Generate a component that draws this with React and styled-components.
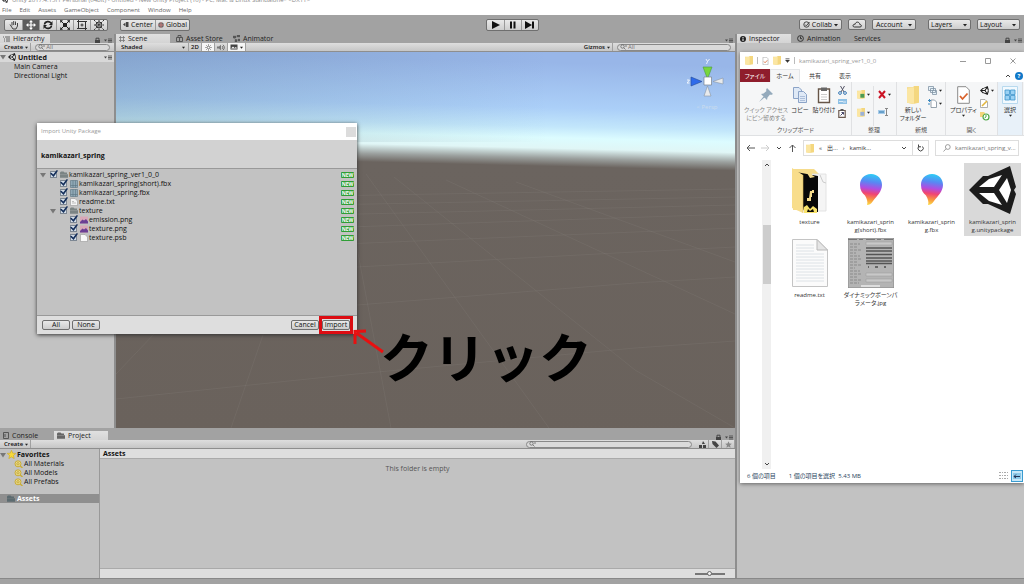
import styled, { createGlobalStyle, css } from "styled-components";

const unityFiles = [
  { name: "kamikazari_spring_ver1_0_0", kind: "folder", depth: 0, open: true },
  { name: "kamikazari_spring(short).fbx", kind: "mesh", depth: 1 },
  { name: "kamikazari_spring.fbx", kind: "mesh", depth: 1 },
  { name: "readme.txt", kind: "text", depth: 1 },
  { name: "texture", kind: "folder", depth: 1, open: true },
  { name: "emission.png", kind: "image", depth: 2 },
  { name: "texture.png", kind: "image", depth: 2 },
  { name: "texture.psb", kind: "blank", depth: 2 },
];

const explorerFiles = [
  { name: "texture", Icon: TextureFolder },
  { name: "kamikazari_sprin\ng(short).fbx", Icon: Balloon },
  { name: "kamikazari_sprin\ng.fbx", Icon: Balloon },
  { name: "kamikazari_sprin\ng.unitypackage", Icon: UnityCube, selected: true },
  { name: "readme.txt", Icon: TextDocument },
  { name: "ダイナミックボーンパ\nラメータ.jpg", Icon: InspectorThumb },
];

export default function App() {
  return (
    <>
      <GlobalStyle />
      <Editor>
        <TitleStrip>
          <UnityMark size={6} />
          Unity 2017.4.15f1 Personal (64bit) - Untitled - New Unity Project (10) - PC, Mac &amp; Linux Standalone* &lt;DX11&gt;
        </TitleStrip>
        <MenuBar>
          {["File", "Edit", "Assets", "GameObject", "Component", "Window", "Help"].map((item) => (
            <MenuItem key={item}>{item}</MenuItem>
          ))}
        </MenuBar>
        <Toolbar />
        <Workspace>
          <LeftSide>
            <Upper>
              <Hierarchy />
              <Scene />
            </Upper>
            <Project />
          </LeftSide>
          <Inspector />
        </Workspace>
        <StatusLine />
        <ImportDialog />
        <Callout>
          <svg width="32" height="26" viewBox="0 0 32 26">
            <path d="M31 23L3 3M3 15V2.500L14 2" fill="none" stroke="#e81010" strokeWidth="3" />
          </svg>
          <CalloutText>クリック</CalloutText>
        </Callout>
      </Editor>
    </>
  );
}

function Toolbar() {
  return (
    <ToolbarRow>
      <ToolSide>
        <ButtonGroup>
          <ToolButton aria-label="Hand">
            <svg width="10" height="10" viewBox="0 0 10 10" fill="none" stroke="#444">
              <path d="M2 6L1 4.500M2 6L4 9H7L8.500 6V3M3 5.500V2M4.700 5V1M6.500 5V1.500" />
            </svg>
          </ToolButton>
          <ToolButton aria-label="Move" $active>
            <svg width="10" height="10" viewBox="0 0 10 10" fill="#fff">
              <path d="M5 0L7 2.300H5.600V4.400H7.700V3L10 5L7.700 7V5.600H5.600V7.700H7L5 10L3 7.700H4.400V5.600H2.300V7L0 5L2.300 3V4.400H4.400V2.300H3Z" />
            </svg>
          </ToolButton>
          <ToolButton aria-label="Rotate">
            <svg width="10" height="10" viewBox="0 0 10 10">
              <path d="M1.500 4.500C2 1 6.500 .8 8 3.200M8.500 5.500C8 9 3.500 9.200 2 6.800" fill="none" stroke="#222" strokeWidth="1.600" />
              <path d="M9.500 1V5H6ZM.5 9V5H4Z" fill="#222" />
            </svg>
          </ToolButton>
          <ToolButton aria-label="Scale">
            <svg width="12" height="10" viewBox="0 0 12 10">
              <path d="M2 1L10 9M10 1L2 9" stroke="#222" />
              <path d="M4 3H8V7H4ZM1 0L4 .5L1.500 3ZM11 0L8 .5L10.500 3ZM1 10L4 9.500L1.500 7ZM11 10L8 9.500L10.500 7Z" fill="#222" />
            </svg>
          </ToolButton>
          <ToolButton aria-label="Rect">
            <svg width="10" height="10" viewBox="0 0 10 10" fill="none" stroke="#333">
              <path d="M1.500 1.500H8.500V8.500H1.500Z" />
              <path d="M0 1.500H3M1.500 0V3M7 8.500H10M8.500 7V10M7 1.500H10M0 8.500H3" />
              <circle cx="5" cy="5" r="1" />
            </svg>
          </ToolButton>
          <ToolButton aria-label="Transform">
            <svg width="12" height="10" viewBox="0 0 12 10" fill="none" stroke="#333">
              <path d="M1 0L11 10M11 0L1 10M6 0V10M1 5H11" strokeDasharray="2 1" />
              <circle cx="6" cy="5" r="3" />
            </svg>
          </ToolButton>
        </ButtonGroup>
        <ButtonGroup>
          <PivotButton>
            <svg width="6" height="5" viewBox="0 0 6 5" fill="#444">
              <path d="M0 2.500L2.500 .5V4.500ZM3 0H5.500V5H3Z" />
            </svg>
            Center
          </PivotButton>
          <PivotButton>
            <svg width="6" height="6" viewBox="0 0 6 6">
              <circle cx="3" cy="3" r="2.800" fill="#666" />
              <path d="M0 3H6M3 0V6" stroke="#d98080" strokeWidth=".8" />
            </svg>
            Global
          </PivotButton>
        </ButtonGroup>
      </ToolSide>
      <ButtonGroup>
        <ToolButton aria-label="Play">
          <svg width="9" height="8" viewBox="0 0 9 8"><path d="M1 0L9 4L1 8Z" fill="#111" /></svg>
        </ToolButton>
        <ToolButton aria-label="Pause">
          <svg width="9" height="8" viewBox="0 0 9 8"><path d="M2 .5H4V7.500H2ZM5.500 .5H7.500V7.500H5.500Z" fill="#111" /></svg>
        </ToolButton>
        <ToolButton aria-label="Step">
          <svg width="9" height="8" viewBox="0 0 9 8"><path d="M0 0L7 4V.5H9V7.500H7V4L0 8Z" fill="#111" /></svg>
        </ToolButton>
      </ButtonGroup>
      <ToolSide $end>
        <DropButton $width={43}>
          <svg width="7" height="7" viewBox="0 0 7 7" fill="none" stroke="#444">
            <circle cx="3.500" cy="3.500" r="2.700" />
            <path d="M2 3.500L3.300 4.800L6.500 1" />
          </svg>
          <span>Collab</span>
          <Caret />
        </DropButton>
        <DropButton $width={18} aria-label="Cloud">
          <svg width="10" height="7" viewBox="0 0 10 7">
            <path d="M2.500 6H8C10 6 9.800 3.500 7.800 3.500C7.600 .5 3.500 .3 3.200 3.200C.5 3 .3 6 2.500 6Z" fill="none" stroke="#333" />
          </svg>
        </DropButton>
        <DropButton $width={44}>
          <span>Account</span>
          <Caret />
        </DropButton>
        <Spacer />
        <DropSelect label="Layers" />
        <DropSelect label="Layout" />
      </ToolSide>
    </ToolbarRow>
  );
}

function DropSelect({ label }) {
  return (
    <SelectFrame>
      <PlainSelect aria-label={label} defaultValue={label}>
        <option>{label}</option>
      </PlainSelect>
      <Caret />
    </SelectFrame>
  );
}

function Hierarchy() {
  return (
    <HierarchyPanel>
      <TabRow>
        <Tab $active>
          <ListIcon />
          Hierarchy
        </Tab>
        <PanelCorner lock />
      </TabRow>
      <SubBar>
        <BarButton>
          Create <Caret small />
        </BarButton>
        <SearchBox $grow>
          <SearchIcon />
          <input aria-label="Search hierarchy" placeholder="All" />
        </SearchBox>
      </SubBar>
      <SceneName>
        <Triangle />
        <UnityMark size={8} />
        <strong>Untitled</strong>
        <PanelCorner />
      </SceneName>
      <HierarchyRow>Main Camera</HierarchyRow>
      <HierarchyRow>Directional Light</HierarchyRow>
    </HierarchyPanel>
  );
}

function Scene() {
  return (
    <ScenePanel>
      <TabRow>
        <Tab $active $wide>
          <GridIcon />
          Scene
        </Tab>
        <Tab $wide>
          <BagIcon />
          Asset Store
        </Tab>
        <Tab>
          <NodesIcon />
          Animator
        </Tab>
        <PanelCorner />
      </TabRow>
      <SubBar>
        <ShadeSelect>
          <PlainSelect $small aria-label="Draw mode" defaultValue="Shaded">
            <option>Shaded</option>
          </PlainSelect>
          <Caret small />
        </ShadeSelect>
        <BarButton>2D</BarButton>
        <BarButton $on aria-label="Lighting">
          <svg width="7" height="7" viewBox="0 0 7 7" stroke="#888">
            <path d="M3.500 0V7M0 3.500H7M1 1L6 6M6 1L1 6" strokeWidth=".7" />
            <circle cx="3.500" cy="3.500" r="1.300" fill="#fff" />
          </svg>
        </BarButton>
        <BarButton aria-label="Audio">
          <svg width="8" height="7" viewBox="0 0 8 7" fill="none" stroke="#555">
            <path d="M0 2.500H2L4 .8V6.200L2 4.500H0Z" fill="#777" stroke="none" />
            <path d="M5 2C6 3 6 4 5 5M6 .8C7.800 2.500 7.800 4.500 6 6.200" strokeWidth=".8" />
          </svg>
        </BarButton>
        <BarButton $on aria-label="Effects">
          <svg width="8" height="6" viewBox="0 0 8 6">
            <path d="M.5 .5H7.500V5.500H.5Z" fill="#444" />
            <path d="M1 4.500L3 2.500L4.500 4L6 3L7 4.500Z" fill="#fff" />
          </svg>
          <Caret small />
        </BarButton>
        <Push />
        <BarButton>
          Gizmos <Caret small />
        </BarButton>
        <SearchBox>
          <SearchIcon />
          <input aria-label="Search scene" placeholder="All" />
        </SearchBox>
      </SubBar>
      <Viewport>
        <Landscape viewBox="0 0 619 376" preserveAspectRatio="none">
          <defs>
            <linearGradient id="sky" gradientUnits="userSpaceOnUse" x1="0" y1="0" x2="-9" y2="376">
              <stop offset="0" stopColor="#98b6e8" />
              <stop offset=".12" stopColor="#abcff8" />
              <stop offset=".17" stopColor="#c2e6fb" />
              <stop offset=".2" stopColor="#dcfcff" />
              <stop offset=".228" stopColor="#e0f6f6" />
              <stop offset=".254" stopColor="#9ba09e" />
              <stop offset=".276" stopColor="#6b645f" />
              <stop offset="1" stopColor="#6a625c" />
            </linearGradient>
            <linearGradient id="shade">
              <stop offset="0" stopColor="#406070" stopOpacity=".22" />
              <stop offset=".7" stopColor="#406070" stopOpacity="0" />
            </linearGradient>
          </defs>
          <rect width="619" height="376" fill="url(#sky)" />
          <rect width="619" height="90" fill="url(#shade)" />
          <g fill="none" stroke="#8d8680" strokeOpacity=".25" strokeWidth=".8">
            <path d="M227 122L275 376M250 122L433 376M278 125L519 318L619 376M330 128L619 262M400 130L619 210" />
            <path d="M0 347L240 322L519 296L619 289M203 256L519 231L619 225M203 217L519 200L619 195M203 193L519 180L619 176M203 176L619 162M203 163L619 153M203 153L619 145M203 144L619 137" />
            <path d="M40 280L0 322M148 280L115 376" />
          </g>
        </Landscape>
        <Gizmo>
          <svg width="40" height="44" viewBox="0 0 40 44">
            <path d="M16 10H25L20.500 22Z" fill="#78d63c" stroke="#4a9a40" strokeWidth=".6" />
            <path d="M4 20V29L15 24.500Z" fill="#2f6bea" stroke="#254a94" strokeWidth=".6" />
            <path d="M36 21V27L26 24.500ZM17 39H24L20.500 29Z" fill="#e8eaec" stroke="#8896a4" strokeWidth=".6" />
            <path d="M17 20H24.500V28H17Z" fill="#fff" stroke="#76828c" strokeWidth=".7" />
            <path d="M19 2L20.500 4.500L22.500 2M20.500 4.500L19.500 7M0 23H2.500L0 26H2.500" fill="none" stroke="#fff" strokeWidth=".8" />
          </svg>
          <span>&lt; Persp</span>
        </Gizmo>
      </Viewport>
    </ScenePanel>
  );
}

function Project() {
  return (
    <ProjectPanel>
      <TabRow>
        <Tab $wide>
          <svg width="6" height="7" viewBox="0 0 6 7"><path d="M.5 .5H5.500V6.500H.5ZM2 2V5" fill="none" stroke="#555" /></svg>
          Console
        </Tab>
        <Tab $active $wide>
          <FolderIcon />
          Project
        </Tab>
        <PanelCorner lock />
      </TabRow>
      <SubBar>
        <BarButton>
          Create <Caret small />
        </BarButton>
        <Push />
        <SearchBox $long>
          <SearchIcon />
          <input aria-label="Search project" />
        </SearchBox>
        <BarButton aria-label="Search by type">
          <svg width="7" height="7" viewBox="0 0 7 7" fill="#444"><path d="M4 0L6 3H3ZM0 4H3V7H0ZM4 4H7V7H4Z" /></svg>
        </BarButton>
        <BarButton aria-label="Search by label">
          <svg width="7" height="7" viewBox="0 0 7 7" fill="#444"><path d="M0 0L3.500 .5L7 4.500L4.500 7L.5 3Z" /></svg>
        </BarButton>
        <BarButton aria-label="Save search">
          <Star size={7} fill="#888" />
        </BarButton>
      </SubBar>
      <ProjectBody>
        <FolderList>
          <FolderRow>
            <Triangle />
            <Star size={9} fill="#f6d93a" stroke="#c9a21d" />
            <strong>Favorites</strong>
          </FolderRow>
          {["All Materials", "All Models", "All Prefabs"].map((name) => (
            <FolderRow key={name} $nested>
              <svg width="9" height="8" viewBox="0 0 9 8" fill="none" stroke="#c9ac35">
                <circle cx="4" cy="3.800" r="3" fill="#e9dc94" />
                <circle cx="4" cy="3.800" r="1.200" />
                <path d="M6.200 6L8.500 8" strokeWidth="1.400" />
              </svg>
              {name}
            </FolderRow>
          ))}
          <FolderRow $selected>
            <FolderIcon fill="#5c6b70" />
            <strong>Assets</strong>
          </FolderRow>
        </FolderList>
        <FolderView>
          <FolderHeader>Assets</FolderHeader>
          <EmptyNote>This folder is empty</EmptyNote>
          <FolderFooter>
            <SizeSlider type="range" aria-label="Icon size" defaultValue="46" />
          </FolderFooter>
        </FolderView>
      </ProjectBody>
    </ProjectPanel>
  );
}

function Inspector() {
  return (
    <InspectorPanel>
      <TabRow>
        <Tab $active $wide>
          <svg width="6" height="6" viewBox="0 0 6 6">
            <circle cx="3" cy="3" r="3" fill="#222" />
            <path d="M3 1V2M3 2.500V5" stroke="#fff" />
          </svg>
          Inspector
        </Tab>
        <Tab $wide>
          <svg width="7" height="7" viewBox="0 0 7 7" fill="none" stroke="#333">
            <circle cx="3.500" cy="3.500" r="2.900" />
            <path d="M3.500 1.500V3.700H5" />
          </svg>
          Animation
        </Tab>
        <Tab>Services</Tab>
        <PanelCorner lock />
      </TabRow>
      <Explorer />
    </InspectorPanel>
  );
}

function Explorer() {
  return (
    <ExplorerWindow>
      <ExplorerTitle>
        <YellowFolder width={8} height={9} />
        <i />
        <CheckPage width={7} height={8} />
        <YellowFolder width={8} height={9} />
        <svg width="5" height="5" viewBox="0 0 5 5"><path d="M.5 .5H4.500M.5 2H4.500L2.500 4.500Z" fill="#333" stroke="#333" strokeWidth=".5" /></svg>
        <i />
        <span>kamikazari_spring_ver1_0_0</span>
        <WindowButtons>
          <button aria-label="Minimize"><svg width="6" height="6" viewBox="0 0 6 6"><path d="M0 3.500H6" stroke="#999" /></svg></button>
          <button aria-label="Maximize"><svg width="6" height="6" viewBox="0 0 6 6"><path d="M.5 .5H5.500V5.500H.5Z" fill="none" stroke="#999" /></svg></button>
          <button aria-label="Close"><svg width="6" height="6" viewBox="0 0 6 6"><path d="M.5 .5L5.500 5.500M5.500 .5L.5 5.500" stroke="#999" /></svg></button>
        </WindowButtons>
      </ExplorerTitle>
      <RibbonTabs>
        <RibbonTab $kind="file">ファイル</RibbonTab>
        <RibbonTab $kind="active">ホーム</RibbonTab>
        <RibbonTab>共有</RibbonTab>
        <RibbonTab>表示</RibbonTab>
        <Push />
        <Chevron up />
        <HelpDot>?</HelpDot>
      </RibbonTabs>
      <Ribbon />
      <AddressRow>
        <NavArrow d="M9 4H1M4 1L1 4L4 7" />
        <NavArrow d="M0 4H8M5 1L8 4L5 7" dim />
        <Chevron />
        <NavArrow d="M4.500 8V1M1.500 4L4.500 1L7.500 4" />
        <PathBox>
          <YellowFolder width={8} height={9} />
          <span>«</span>
          <span>出...</span>
          <span>›</span>
          <span>kamik...</span>
          <Push />
          <Chevron />
          <RefreshButton aria-label="Refresh">
            <svg width="7" height="8" viewBox="0 0 7 8" fill="none" stroke="#444">
              <path d="M5.500 2.500A2.600 2.600 0 1 1 2 2.300M1.500 .5V2.800H4" />
            </svg>
          </RefreshButton>
        </PathBox>
        <FindBox>
          <svg width="8" height="8" viewBox="0 0 8 8" fill="none" stroke="#888" strokeWidth=".8">
            <circle cx="4.800" cy="3" r="2.400" />
            <path d="M3 4.800L.5 7.500" />
          </svg>
          <input aria-label="Search files" placeholder="kamikazari_spring_v..." />
        </FindBox>
      </AddressRow>
      <ExplorerBody>
        <ScrollTrack>
          <Chevron up />
          <ScrollThumb />
          <Chevron />
        </ScrollTrack>
        <FileGrid>
          {explorerFiles.map(({ name, Icon, selected }) => (
            <FileItem key={name} $selected={selected}>
              <FilePicture>
                <Icon />
              </FilePicture>
              <span>{name}</span>
            </FileItem>
          ))}
        </FileGrid>
      </ExplorerBody>
      <ExplorerStatus>
        <span>6 個の項目</span>
        <span>1 個の項目を選択&nbsp; 5.43 MB</span>
        <Push />
        <svg width="9" height="8" viewBox="0 0 9 8"><path d="M0 .5H4M0 3.500H4M0 6.500H4M5 .5H9M5 3.500H9M5 6.500H9" stroke="#aaa" strokeDasharray="2 1" /></svg>
        <ViewToggle aria-label="Large icons">
          <svg width="8" height="8" viewBox="0 0 8 8"><path d="M0 1H8V7H0Z" fill="#8cc8e8" /><path d="M1 4.500H7M3 2.500L1 4.500L3 6" fill="none" stroke="#235" /></svg>
        </ViewToggle>
      </ExplorerStatus>
    </ExplorerWindow>
  );
}

function Ribbon() {
  return (
    <RibbonBar>
      <RibbonGroup $width={112}>
        <RibbonBody>
          <BigButton $dim $width={46}>
            <svg width="18" height="18" viewBox="0 0 18 18">
              <path d="M10 2L16 8L14 9L13 8.500L10.500 11.500L10 14L4 8L6.500 7.500L9.500 5L9 4ZM6.500 10.500L2 16L7.500 11.500Z" fill="#94aabc" />
            </svg>
            クイック アクセス<br />にピン留めする
          </BigButton>
          <BigButton $width={22}>
            <svg width="16" height="18" viewBox="0 0 16 18" fill="#dfe9f6" stroke="#8ba3c7">
              <path d="M1.500 1.500H7L9.500 4V12.500H1.500Z" />
              <path d="M6.500 5.500H11.500L14.500 8.500V16.500H6.500Z" />
              <path d="M8 10.500H13M8 12.500H13M8 14.500H13" strokeWidth=".6" />
            </svg>
            コピー
          </BigButton>
          <BigButton $width={26}>
            <svg width="14" height="18" viewBox="0 0 14 18">
              <path d="M1.500 3H12.500V16.500H1.500Z" fill="#fff" stroke="#665548" strokeWidth="1.400" />
              <path d="M4 1.500H10V5H4Z" fill="#666" />
              <path d="M4 8.500H10M4 11H10M4 13.500H10" stroke="#ccc" />
            </svg>
            貼り付け
          </BigButton>
          <SmallColumn>
            <svg width="9" height="9" viewBox="0 0 9 9" fill="none" stroke="#3b7ab5">
              <path d="M2.500 0L6 6M6.500 0L3 6" stroke="#556" />
              <circle cx="2" cy="7" r="1.400" /><circle cx="7" cy="7" r="1.400" />
            </svg>
            <svg width="9" height="6" viewBox="0 0 9 6"><path d="M0 0H9V5H0Z" fill="#8fc1e6" /><path d="M1 3L2 2L3 3L4 2L5 3H8" fill="none" stroke="#fff" strokeWidth=".7" /></svg>
            <svg width="8" height="9" viewBox="0 0 8 9"><path d="M.8 1.500H7.200V8.300H.8Z" fill="#fff" stroke="#6b5a50" strokeWidth="1.200" /><path d="M2.500 0H5.500V2H2.500Z" fill="#555" /><path d="M2.500 6.500L5.500 3.500M3.500 3.500H5.500V5.500" fill="none" stroke="#446" /></svg>
          </SmallColumn>
        </RibbonBody>
        クリップボード
      </RibbonGroup>
      <RibbonGroup $width={45}>
        <RibbonBody>
          <SmallColumn $spread>
            <SmallPair><YellowFolder width={8} height={9} mark="#4b9a55" /><Caret small /></SmallPair>
            <SmallPair><YellowFolder width={8} height={9} mark="#9ab1d8" /><Caret small /></SmallPair>
          </SmallColumn>
          <SmallColumn $spread $ruled>
            <SmallPair>
              <svg width="8" height="9" viewBox="0 0 8 9"><path d="M1 1L7 8M7 1L1 8" stroke="#cc1425" strokeWidth="2" /></svg>
              <Caret small />
            </SmallPair>
            <svg width="11" height="8" viewBox="0 0 11 8"><path d="M0 2H7V6H0Z" fill="#a7cbe8" /><path d="M1 4H6" stroke="#2977ad" /><path d="M7 .5H10M8.500 .5V7.500M7 7.500H10" stroke="#888" /></svg>
          </SmallColumn>
        </RibbonBody>
        整理
      </RibbonGroup>
      <RibbonGroup $width={49}>
        <RibbonBody>
          <BigButton $width={28}>
            <YellowFolder width={12} height={18} />
            新しい<br />フォルダー
          </BigButton>
          <SmallColumn>
            <SmallPair>
              <svg width="9" height="9" viewBox="0 0 9 9" fill="#e8f3fa" stroke="#8093a3"><path d="M.5 .5H5.500V4.500H.5ZM2.500 2.500H7.500V6.500H2.500ZM4.500 4.500H8.500V8.500H4.500Z" strokeWidth=".8" /></svg>
              <Caret small />
            </SmallPair>
            <SmallPair>
              <svg width="9" height="9" viewBox="0 0 9 9"><path d="M3 1H6.500L8.500 3V8.500H3Z" fill="#fff" stroke="#7d8d9b" strokeWidth=".8" /><path d="M0 1.500H3M1.500 0V3M0 5H2" stroke="#3a87bd" /></svg>
              <Caret small />
            </SmallPair>
          </SmallColumn>
        </RibbonBody>
        新規
      </RibbonGroup>
      <RibbonGroup $width={52}>
        <RibbonBody>
          <BigButton $width={30}>
            <CheckPage width={13} height={18} />
            プロパティ
            <Caret small />
          </BigButton>
          <SmallColumn>
            <SmallPair><UnityMark size={9} /><Caret small /></SmallPair>
            <svg width="8" height="9" viewBox="0 0 8 9"><path d="M.5 .5H5L7.500 3V8.500H.5Z" fill="#fff" stroke="#9a9a9a" strokeWidth=".8" /><path d="M2 7L7 2" stroke="#e2b53c" strokeWidth="1.600" /></svg>
            <svg width="10" height="9" viewBox="0 0 10 9"><path d="M0 0H4L5 1V5H0Z" fill="#f3d57b" /><circle cx="6" cy="5" r="3" fill="#fff" stroke="#4fa847" strokeWidth="1.200" /><path d="M6 3V5L4.500 6" fill="none" stroke="#4fa847" /></svg>
          </SmallColumn>
        </RibbonBody>
        開く
      </RibbonGroup>
      <RibbonGroup $width={25} $hot>
        <RibbonBody>
          <BigButton $width={24}>
            <svg width="16" height="18" viewBox="0 0 16 18"><path d="M.5 .5H15.500V17.500H.5Z" fill="#f2f9fe" stroke="#b7d9ee" /><path d="M3 4H7.500V8.500H3ZM8.500 4H13V8.500H8.500ZM3 9.500H7.500V14H3ZM8.500 9.500H13V14H8.500Z" fill="#9bd2f4" stroke="#3d94cc" strokeWidth=".8" /></svg>
            選択
            <Caret small />
          </BigButton>
        </RibbonBody>
      </RibbonGroup>
    </RibbonBar>
  );
}

function ImportDialog() {
  return (
    <Dialog role="dialog" aria-label="Import Unity Package">
      <DialogTitle>
        Import Unity Package
        <DialogClose aria-label="Close" />
      </DialogTitle>
      <DialogHeader>kamikazari_spring</DialogHeader>
      <DialogList>
        {unityFiles.map((file) => (
          <ImportRow key={file.name} $depth={file.depth}>
            <Fold>{file.open && <Triangle />}</Fold>
            <label>
              <Check type="checkbox" defaultChecked />
              <FileGlyph kind={file.kind} />
              {file.name}
            </label>
            <NewBadge>NEW</NewBadge>
          </ImportRow>
        ))}
      </DialogList>
      <DialogFooter>
        <DialogButton>All</DialogButton>
        <DialogButton>None</DialogButton>
        <Push />
        <DialogButton>Cancel</DialogButton>
        <Highlight>
          <DialogButton>Import</DialogButton>
        </Highlight>
      </DialogFooter>
    </Dialog>
  );
}

/* ---- icons ---- */

function Caret({ small }) {
  const size = small ? 3 : 4;
  return (
    <svg width={size} height={size} viewBox="0 0 4 4">
      <path d="M0 1H4L2 3.500Z" fill="#222" />
    </svg>
  );
}

function Chevron({ up }) {
  return (
    <svg width="6" height="6" viewBox="0 0 6 6">
      <path d={up ? "M1 4L3 2L5 4" : "M1 2L3 4L5 2"} fill="none" stroke="#444" />
    </svg>
  );
}

function NavArrow({ d, dim }) {
  return (
    <svg width="9" height="8" viewBox="0 0 9 8">
      <path d={d} fill="none" stroke={dim ? "#ccc" : "#555"} />
    </svg>
  );
}

function Triangle() {
  return (
    <svg width="6" height="6" viewBox="0 0 6 6">
      <path d="M0 1H6L3 5.500Z" fill="#777" />
    </svg>
  );
}

function Star({ size, fill, stroke = "none" }) {
  return (
    <svg width={size} height={size} viewBox="0 0 10 10">
      <path d="M5 .3L6.400 3.500L9.800 3.800L7.200 6.100L8 9.600L5 7.700L2 9.600L2.800 6.100L.2 3.800L3.600 3.500Z" fill={fill} stroke={stroke} strokeWidth=".6" />
    </svg>
  );
}

function UnityMark({ size }) {
  return (
    <svg width={size} height={size} viewBox="0 0 48 48">
      <UnityShape />
    </svg>
  );
}

function UnityShape() {
  return (
    <>
      <path d="M0 24L14 10H19L41 0L47 21L45 24L47 28L41 48L19 38H14Z" fill="#1c1c1c" />
      <path d="M10 21L20 13L33 9L25 21ZM10 27H25L33 39L20 35ZM30 24L38 12L42 24L38 37Z" fill="#fff" />
    </>
  );
}

function UnityCube() {
  return (
    <svg width="48" height="48" viewBox="0 0 48 48">
      <UnityShape />
    </svg>
  );
}

function ListIcon() {
  return (
    <svg width="7" height="6" viewBox="0 0 7 6">
      <path d="M0 1H1M2 1H7M1 3H2M3 3H7M1 5H2M3 5H7" stroke="#555" strokeWidth=".9" />
    </svg>
  );
}

function GridIcon() {
  return (
    <svg width="6" height="6" viewBox="0 0 6 6">
      <path d="M1.500 0V6M4.500 0V6M0 1.500H6M0 4.500H6" stroke="#777" strokeWidth=".8" />
    </svg>
  );
}

function BagIcon() {
  return (
    <svg width="7" height="7" viewBox="0 0 7 7" fill="none" stroke="#555">
      <path d="M.5 2.500H6.500V6.500H.5ZM2 2.500V.5H5V2.500M3.500 2.500V6" />
    </svg>
  );
}

function NodesIcon() {
  return (
    <svg width="7" height="7" viewBox="0 0 7 7">
      <path d="M0 1H3V3H0ZM4 0H7V2H4ZM2 4.500H4V7H2ZM5 4H7V6H5ZM1 3L3 5" fill="#555" stroke="#555" strokeWidth=".4" />
    </svg>
  );
}

function SearchIcon() {
  return (
    <svg width="7" height="6" viewBox="0 0 7 6" fill="none" stroke="#666" strokeWidth=".8">
      <circle cx="2.500" cy="2.500" r="1.700" />
      <path d="M3.800 3.800L5.500 5.500M5 2H7" />
    </svg>
  );
}

function FolderIcon({ fill = "#666" }) {
  return (
    <svg width="8" height="7" viewBox="0 0 8 7">
      <path d="M0 1.500L1 .5H3.500L4.500 1.500H7V3H0ZM0 3.300H8V6.800H0Z" fill={fill} />
    </svg>
  );
}

function YellowFolder({ width, height, mark }) {
  return (
    <svg width={width} height={height} viewBox="0 0 12 14" preserveAspectRatio="none">
      <path d="M0 1H6L7 0H12V13L6 14L0 13Z" fill="#f4d77f" />
      <path d="M0 2L7 1V14L0 13Z" fill="#fbe6a3" />
      {mark && <path d="M5 6H11V12H5Z" fill={mark} />}
    </svg>
  );
}

function CheckPage({ width, height }) {
  return (
    <svg width={width} height={height} viewBox="0 0 13 18">
      <path d="M.7 .7H9L12.300 4V17.300H.7Z" fill="#fff" stroke="#8b8b8b" />
      <path d="M3 10L5.500 13L10.500 7.500" fill="none" stroke="#d9622b" strokeWidth="1.800" />
    </svg>
  );
}

function FileGlyph({ kind }) {
  if (kind === "folder") return <FolderIcon fill="#7b8484" />;
  return (
    <svg width="8" height="8" viewBox="0 0 8 8">
      {kind === "mesh" && <path d="M.5 .5H7.500V7.500H.5ZM.5 5.500H7.500M3 .5V7.500M5.500 .5V7.500" fill="#8fa8b6" stroke="#5a7382" strokeWidth=".6" />}
      {kind === "text" && (
        <>
          <path d="M.5 .5H5L7.500 3V7.500H.5Z" fill="#f4f4f4" stroke="#999" strokeWidth=".6" />
          <path d="M2 5H6M2 3.500H4" stroke="#999" strokeWidth=".6" />
        </>
      )}
      {kind === "image" && (
        <>
          <path d="M0 .5H8V7.500H0Z" fill="#d9a8b8" />
          <path d="M0 6L2.500 3.500L4 4.500L6 3L8 5.500V7.500H0Z" fill="#6b3f94" />
        </>
      )}
      {kind === "blank" && <path d="M.5 .5H5L7.500 3V7.500H.5Z" fill="#f8f8f8" stroke="#999" strokeWidth=".6" />}
    </svg>
  );
}

function TextureFolder() {
  return (
    <svg width="40" height="48" viewBox="0 0 40 48">
      <path d="M3 3H24L30 9V44H3Z" fill="#f6dc8c" />
      <path d="M18 8H36V45H18Z" fill="#f5f5f5" stroke="#ddd" strokeWidth=".8" />
      <path d="M30 9L33 16L36 17" fill="none" stroke="#ccc" />
      <path d="M6 6L28 10V46L14 45Z" fill="#080808" />
      <path d="M17 7H22V9L25 11L20 12ZM20 25H22V31H21V35H17V32H19ZM22 24H24V27H22Z" fill="#f6dc8c" />
      <path d="M14 41L17 39L20 43L23 40L27 43V47H14Z" fill="#f9e36c" />
      <path d="M18 43L20 45L23 43L24 46H17Z" fill="#080808" />
      <path d="M2 2L13 9V47L2 42Z" fill="#f8dd8b" />
      <path d="M13 9V47" stroke="#d9b85c" strokeWidth=".6" />
    </svg>
  );
}

function Balloon() {
  return (
    <svg width="24" height="34" viewBox="0 0 24 34">
      <defs>
        <linearGradient id="balloon" x1=".4" y1="0" x2=".3" y2="1">
          <stop offset="0" stopColor="#2fc9f5" />
          <stop offset=".25" stopColor="#5a86f3" />
          <stop offset=".45" stopColor="#b04de0" />
          <stop offset=".62" stopColor="#f04474" />
          <stop offset=".82" stopColor="#f99a3c" />
          <stop offset="1" stopColor="#fbe04a" />
        </linearGradient>
      </defs>
      <path d="M12 1C19 1 23 6 23 12C23 18 18 23 14 28C12 31 10 32 8 32C9 29 8 26 6 22.500C3 20 1 17 1 12C1 6 5 1 12 1Z" fill="url(#balloon)" />
    </svg>
  );
}

function TextDocument() {
  return (
    <svg width="36" height="48" viewBox="0 0 36 48">
      <path d="M.5 .5H25L35.500 11V47.500H.5Z" fill="#fbfbfb" stroke="#c4c4c4" />
      <path d="M25 .5V11H35.500Z" fill="#e5e5e5" stroke="#b9b9b9" />
      <path d="M4 6H22M4 9H22M4 12H22M4 15H32M4 18H32M4 21H32M4 24H32M4 27H32M4 30H32M4 33H32M4 36H32M4 39H32M4 42H32" stroke="#dde2e6" />
    </svg>
  );
}

function InspectorThumb() {
  return (
    <svg width="46" height="50" viewBox="0 0 46 50">
      <path d="M0 0H46V50H0Z" fill="#b4b4b4" stroke="#888" />
      <path d="M0 1.500H46" stroke="#777" strokeDasharray="9 2 4 3" />
      <path d="M2 6H12M2 9H10M2 12H14M2 15H8M2 18H12M2 21H14M2 24H10M2 27H13M2 30H7M2 33H12M2 36H13M2 39H9M2 42H14M2 45H11" stroke="#8a8a8a" strokeDasharray="3 1" />
      <path d="M18 4H44V7H18ZM18 35H44V38H18ZM18 41H44V44H18Z" fill="#c8c8c8" stroke="#999" strokeWidth=".5" />
      <path d="M18 10H44M18 13H44M18 16.500H44M18 20H44M18 23H44M18 25.500H44" stroke="#555" strokeWidth="1.600" />
      <path d="M20 29H21M27 29H30M36 29H38" stroke="#666" strokeWidth="2" />
      <path d="M13 47H32V49H13Z" fill="#ddd" />
    </svg>
  );
}

function PanelCorner({ lock }) {
  return (
    <Corner>
      {lock && (
        <svg width="5" height="6" viewBox="0 0 5 6">
          <path d="M0 3H5V6H0Z" fill="#444" />
          <path d="M1 3V1.200H4V3" fill="none" stroke="#444" />
        </svg>
      )}
      <svg width="8" height="5" viewBox="0 0 8 5">
        <path d="M0 1.500H3L1.500 3.500Z" fill="#444" />
        <path d="M4 1H8M4 2.500H8M4 4H8" stroke="#444" strokeWidth=".8" />
      </svg>
    </Corner>
  );
}

/* ---- styles ---- */

const GlobalStyle = createGlobalStyle`
  * {
    box-sizing: border-box;
  }
  body {
    margin: 0;
    font: 7px/9px "Open Sans", "Noto Sans CJK JP", sans-serif;
    color: #111;
  }
  button, input, select {
    margin: 0;
    padding: 0;
    border: 0;
    border-radius: 0;
    background: none;
    font: inherit;
    color: inherit;
  }
  svg {
    flex: none;
    display: block;
  }
`;

const Editor = styled.div`
  position: relative;
  display: flex;
  flex-direction: column;
  min-height: 100vh;
  overflow: hidden;
  background-color: #a2a2a2;
`;

const TitleStrip = styled.div`
  display: flex;
  align-items: flex-end;
  gap: 4px;
  height: 3px;
  padding-left: 2px;
  background-color: white;
  color: #888;
  font-size: 6px;
  line-height: 6px;
`;

const MenuBar = styled.nav`
  display: flex;
  align-items: center;
  gap: 8px;
  height: 12px;
  padding: 2px 2px 0;
  background-color: white;
`;

const MenuItem = styled.button`
  font-size: 6px;
  line-height: 10px;
  color: #666;
`;

const ToolbarRow = styled.div`
  display: grid;
  grid-template-columns: 1fr auto 1fr;
  align-items: center;
  height: 19px;
  padding: 0 4px;
`;

const ToolSide = styled.div`
  display: flex;
  gap: ${({ $end }) => ($end ? 6 : 12)}px;
  justify-content: ${({ $end }) => ($end ? "flex-end" : "flex-start")};
`;

const Spacer = styled.span`
  width: 0;
`;

const raised = css`
  background-image: linear-gradient(#e9e9e9, #cdcdcd);
  border: 1px solid #6f6f6f;
  border-radius: 2px;
`;

const ButtonGroup = styled.div`
  display: flex;
  height: 12px;
  overflow: hidden;
  ${raised}
  button + button {
    border-left: 1px solid #999;
  }
`;

const ToolButton = styled.button`
  display: flex;
  align-items: center;
  justify-content: center;
  width: 17px;
  background-color: ${({ $active }) => ($active ? "#5c5c5c" : "transparent")};
`;

const PivotButton = styled.button`
  display: flex;
  align-items: center;
  justify-content: center;
  gap: 2px;
  width: 34px;
  font-weight: 500;
`;

const DropButton = styled.button`
  display: flex;
  align-items: center;
  justify-content: space-between;
  width: ${({ $width }) => $width}px;
  height: 11px;
  padding: 0 3px;
  font-weight: 500;
  ${raised}
`;

const SelectFrame = styled.span`
  display: flex;
  align-items: center;
  width: 43px;
  height: 11px;
  padding: 0 3px 0 2px;
  ${raised}
`;

const PlainSelect = styled.select`
  appearance: none;
  flex: 1;
  min-width: 0;
  font-size: ${({ $small }) => ($small ? 6 : 7)}px;
  font-weight: ${({ $small }) => ($small ? 600 : 500)};
`;

const Workspace = styled.main`
  flex: 1;
  display: flex;
  gap: 2px;
  background-color: #8e8e8e;
`;

const LeftSide = styled.div`
  flex: 1;
  display: flex;
  flex-direction: column;
  min-width: 0;
`;

const Upper = styled.div`
  flex: 1;
  display: flex;
  gap: 2px;
`;

const panel = css`
  display: flex;
  flex-direction: column;
  background-color: #c2c2c2;
`;

const HierarchyPanel = styled.section`
  ${panel}
  width: 114px;
`;

const ScenePanel = styled.section`
  ${panel}
  flex: 1;
`;

const ProjectPanel = styled.section`
  ${panel}
  height: 150px;
`;

const InspectorPanel = styled.section`
  ${panel}
  position: relative;
  width: 287px;
`;

const TabRow = styled.div`
  display: flex;
  align-items: flex-end;
  gap: 3px;
  height: 9px;
  background-color: #a2a2a2;
  ${ProjectPanel} & {
    gap: 0;
    height: 12px;
  }
`;

const Tab = styled.button`
  display: flex;
  align-items: center;
  gap: 3px;
  min-width: ${({ $wide }) => ($wide ? 54 : 50)}px;
  height: 9px;
  padding: 0 4px 0 3px;
  color: #222;
  ${({ $active }) => $active && "background-image: linear-gradient(#e0e0e0, #d4d4d4);"}
`;

const Corner = styled.span`
  display: flex;
  align-items: flex-end;
  gap: 4px;
  margin-left: auto;
  padding-right: 2px;
`;

const SubBar = styled.div`
  display: flex;
  align-items: center;
  height: 9px;
  padding-left: 2px;
  background-image: linear-gradient(#dedede, #c6c6c6);
  border-bottom: 1px solid #8e8e8e;
`;

const BarButton = styled.button`
  display: flex;
  align-items: center;
  justify-content: center;
  gap: 2px;
  min-width: 13px;
  height: 8px;
  padding: 0 2px;
  border-right: 1px solid #a0a0a0;
  background-color: ${({ $on }) => ($on ? "#f6f6f6" : "transparent")};
  font-size: 6px;
  font-weight: 600;
  line-height: 8px;
`;

const ShadeSelect = styled.span`
  display: flex;
  align-items: center;
  width: 71px;
  height: 8px;
  padding: 0 3px;
  border-right: 1px solid #a0a0a0;
`;

const Push = styled.span`
  flex: 1;
`;

const SearchBox = styled.label`
  display: flex;
  align-items: center;
  gap: 1px;
  flex: ${({ $grow }) => ($grow ? "1" : "none")};
  width: ${({ $long }) => ($long ? 166 : 114)}px;
  min-width: 0;
  height: 7px;
  margin: 0 4px;
  padding: 0 2px;
  border: 1px solid #888;
  border-radius: 4px;
  background-color: #dadada;
  input {
    flex: 1;
    min-width: 0;
    height: 7px;
    outline: none;
    font-size: 6px;
    line-height: 7px;
  }
`;

const SceneName = styled.div`
  display: flex;
  align-items: center;
  gap: 2px;
  height: 10px;
  background-color: #d8d8d8;
`;

const HierarchyRow = styled.div`
  padding-left: 14px;
`;

const Viewport = styled.div`
  position: relative;
  flex: 1;
`;

const Landscape = styled.svg`
  position: absolute;
  width: 100%;
  height: 100%;
`;

const Gizmo = styled.div`
  position: absolute;
  top: 5px;
  right: 8px;
  display: flex;
  flex-direction: column;
  align-items: center;
  gap: 2px;
  color: #ccdcec;
  font-size: 6px;
`;

const ProjectBody = styled.div`
  flex: 1;
  display: flex;
`;

const FolderList = styled.div`
  width: 100px;
  padding-top: 1px;
  border-right: 1px solid #999;
`;

const FolderRow = styled.div`
  display: flex;
  align-items: center;
  gap: 1px;
  height: 9px;
  padding-left: ${({ $nested }) => ($nested ? 14 : 0)}px;
  ${({ $selected }) =>
    $selected &&
    css`
      gap: 2px;
      margin-top: 8px;
      padding-left: 7px;
      background-color: #8f8f8f;
      color: white;
    `}
`;

const FolderView = styled.div`
  flex: 1;
  display: flex;
  flex-direction: column;
`;

const FolderHeader = styled.div`
  height: 10px;
  padding-left: 3px;
  background-color: #dedede;
  border-bottom: 1px solid #aaa;
  font-weight: 700;
`;

const EmptyNote = styled.p`
  flex: 1;
  margin: 0;
  padding-top: 5px;
  text-align: center;
  color: #555;
`;

const FolderFooter = styled.div`
  display: flex;
  align-items: center;
  justify-content: flex-end;
  height: 10px;
  padding-right: 10px;
  border-top: 1px solid #aaa;
  background-color: #dedede;
`;

const SizeSlider = styled.input`
  appearance: none;
  width: 30px;
  height: 2px;
  background-color: #777;
  &::-webkit-slider-thumb {
    appearance: none;
    width: 5px;
    height: 5px;
    border: 1px solid #666;
    border-radius: 50%;
    background-color: #eee;
  }
`;

const StatusLine = styled.footer`
  height: 6px;
  border-top: 1px solid #888;
`;

const ExplorerWindow = styled.section`
  position: absolute;
  top: 18px;
  left: 3px;
  right: 0;
  display: flex;
  flex-direction: column;
  height: 431px;
  background-color: white;
  box-shadow: 0 1px 4px #666;
  font-size: 6px;
  line-height: 8px;
  font-feature-settings: "palt";
  color: #333;
`;

const ExplorerTitle = styled.header`
  display: flex;
  align-items: center;
  gap: 4px;
  height: 17px;
  padding-left: 5px;
  color: #999;
  i {
    width: 1px;
    height: 7px;
    background-color: #bbb;
  }
`;

const WindowButtons = styled.span`
  display: flex;
  gap: 19px;
  margin-left: auto;
  padding-right: 8px;
`;

const RibbonTabs = styled.nav`
  display: flex;
  align-items: center;
  height: 13px;
  padding-right: 1px;
`;

const tabKinds = {
  file: "background-color: #8f1d2c; color: white;",
  active: "background-color: #f5f6f7; border: 1px solid #e4e6e8; border-bottom: 0;",
};

const RibbonTab = styled.button`
  width: 30px;
  height: 13px;
  ${({ $kind }) => tabKinds[$kind]}
`;

const HelpDot = styled.button`
  width: 8px;
  height: 8px;
  margin-left: 4px;
  border-radius: 50%;
  background-color: #1178c8;
  color: white;
  font-weight: 700;
  line-height: 8px;
`;

const RibbonBar = styled.div`
  display: flex;
  height: 54px;
  background-color: #f5f6f7;
  border-bottom: 1px solid #dfe1e3;
`;

const RibbonGroup = styled.div`
  display: flex;
  flex-direction: column;
  flex: none;
  width: ${({ $width }) => $width}px;
  padding: 4px 0 1px;
  border-right: 1px solid #e0e1e3;
  background-color: ${({ $hot }) => ($hot ? "#e8f1f9" : "transparent")};
  text-align: center;
  color: #555;
`;

const RibbonBody = styled.div`
  flex: 1;
  display: flex;
  justify-content: center;
`;

const BigButton = styled.button`
  display: flex;
  flex-direction: column;
  align-items: center;
  flex: none;
  width: ${({ $width }) => $width}px;
  white-space: nowrap;
  color: ${({ $dim }) => ($dim ? "#888" : "#333")};
  svg:first-child {
    margin-bottom: 2px;
  }
`;

const SmallColumn = styled.div`
  display: flex;
  flex-direction: column;
  align-items: flex-start;
  gap: ${({ $spread }) => ($spread ? 9 : 4)}px;
  padding: ${({ $spread }) => ($spread ? "4px 3px 0" : "0 1px")};
  ${({ $ruled }) => $ruled && "border-left: 1px solid #e0e1e3; padding-left: 4px;"}
`;

const SmallPair = styled.button`
  display: flex;
  align-items: center;
  gap: 2px;
`;

const AddressRow = styled.div`
  display: flex;
  align-items: center;
  gap: 6px;
  height: 24px;
  padding: 0 5px 0 6px;
`;

const PathBox = styled.div`
  display: flex;
  align-items: center;
  gap: 5px;
  width: 126px;
  height: 16px;
  padding-left: 2px;
  border: 1px solid #ddd;
`;

const RefreshButton = styled.button`
  display: flex;
  align-items: center;
  justify-content: center;
  width: 16px;
  height: 14px;
  border-left: 1px solid #ddd;
`;

const FindBox = styled.label`
  display: flex;
  align-items: center;
  gap: 4px;
  flex: 1;
  height: 16px;
  min-width: 0;
  padding-left: 7px;
  border: 1px solid #ddd;
  input {
    flex: 1;
    min-width: 0;
    outline: none;
  }
  input::placeholder {
    color: #777;
  }
`;

const ExplorerBody = styled.div`
  flex: 1;
  display: flex;
`;

const ScrollTrack = styled.div`
  display: flex;
  flex-direction: column;
  align-items: center;
  justify-content: space-between;
  width: 9px;
  margin-left: 22px;
  padding: 2px 0;
  background-color: #f0f0f0;
`;

const ScrollThumb = styled.div`
  width: 8px;
  height: 59px;
  margin-bottom: 120px;
  background-color: #cdcdcd;
`;

const FileGrid = styled.div`
  display: grid;
  grid-template-columns: repeat(auto-fill, 57px);
  gap: 0 4px;
  flex: 1;
  align-content: start;
  padding: 3px 0 0 10px;
`;

const FileItem = styled.button`
  display: flex;
  flex-direction: column;
  align-items: center;
  gap: 3px;
  height: 73px;
  padding-top: 1px;
  background-color: ${({ $selected }) => ($selected ? "#d9d9d9" : "transparent")};
  span {
    white-space: pre;
  }
`;

const FilePicture = styled.div`
  display: flex;
  align-items: center;
  justify-content: center;
  height: 51px;
`;

const ExplorerStatus = styled.footer`
  display: flex;
  align-items: center;
  gap: 13px;
  height: 14px;
  padding: 0 1px 0 7px;
  color: #2b4560;
  svg {
    margin-right: -10px;
  }
`;

const ViewToggle = styled.button`
  display: flex;
  align-items: center;
  width: 12px;
  height: 12px;
  padding-left: 1px;
  border: 1px solid #3a9bd0;
  background-color: #c8e8f8;
`;

const Dialog = styled.section`
  position: absolute;
  top: 123px;
  left: 37px;
  display: flex;
  flex-direction: column;
  width: 320px;
  height: 211px;
  background-color: #c2c2c2;
  box-shadow: 0 1px 4px #333;
`;

const DialogTitle = styled.header`
  display: flex;
  align-items: center;
  justify-content: space-between;
  height: 17px;
  padding: 0 1px 0 4px;
  background-color: white;
  color: #999;
  font-size: 6px;
`;

const DialogClose = styled.button`
  width: 10px;
  height: 10px;
  background-color: #dcdcdc;
`;

const DialogHeader = styled.h1`
  display: flex;
  align-items: center;
  height: 29px;
  margin: 0;
  padding: 2px 0 0 4px;
  background-color: #d2d2d2;
  border-bottom: 1px solid #999;
  font-size: 7px;
`;

const DialogList = styled.div`
  flex: 1;
  padding-top: 1px;
`;

const ImportRow = styled.div`
  display: flex;
  align-items: center;
  height: 9px;
  padding: 0 3px 0 ${({ $depth }) => 3 + $depth * 10}px;
  label {
    display: flex;
    align-items: center;
    gap: 1px;
  }
`;

const Fold = styled.span`
  width: 10px;
`;

const Check = styled.input`
  appearance: none;
  position: relative;
  width: 7px;
  height: 7px;
  margin-right: 2px;
  border: 1px solid #7d8793;
  background-color: #d3dde8;
  &:checked::after {
    content: "";
    position: absolute;
    top: -2px;
    left: -1px;
    width: 8px;
    height: 7px;
    background-color: #16305c;
    clip-path: polygon(0 50%, 20% 40%, 40% 65%, 85% 0, 100% 10%, 45% 100%);
  }
`;

const NewBadge = styled.span`
  width: 13px;
  height: 6px;
  margin-left: auto;
  border-radius: 1px;
  background-color: #2f9e36;
  color: white;
  font-size: 5px;
  font-weight: 700;
  line-height: 6px;
  text-align: center;
`;

const DialogFooter = styled.footer`
  display: flex;
  align-items: center;
  gap: 2px;
  height: 19px;
  padding: 0 4px 0 5px;
  background-color: #dedede;
  border-top: 1px solid #999;
`;

const DialogButton = styled.button`
  width: 28px;
  height: 10px;
  line-height: 8px;
  ${raised}
`;

const Highlight = styled.span`
  display: flex;
  margin-left: -2px;
  padding: 1px 0;
  border: 3px solid #dc0c12;
`;

const Callout = styled.div`
  position: absolute;
  top: 329px;
  left: 352px;
  display: flex;
`;

const CalloutText = styled.p`
  margin: 0 0 0 -4px;
  font: 700 53px/52px "Noto Sans CJK JP", sans-serif;
  color: black;
`;
